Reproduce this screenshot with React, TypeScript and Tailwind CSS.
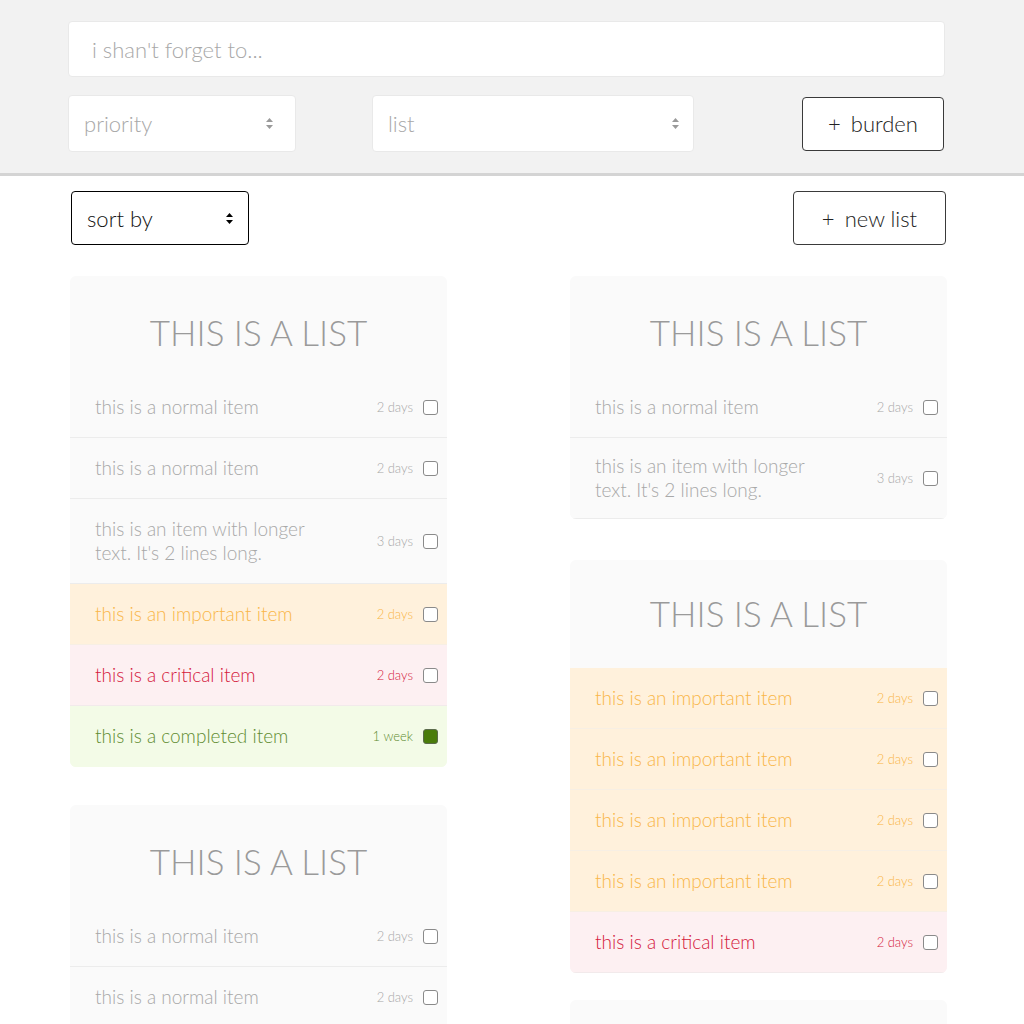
import React from "react";

type Kind = "normal" | "important" | "critical" | "done";

type Item = { text: string; due: string; kind: Kind; tight?: boolean };

const rowStyles: Record<Kind, string> = {
  normal: "bg-[#fafafa] text-[#a8a8a8] border-[#ececec]",
  important: "bg-[#fff1dc] text-[#f9b648] border-[#f7efe4]",
  critical: "bg-[#fdf0f2] text-[#d4183c] border-[#f2eaeb]",
  done: "bg-[#f3fbe7] text-[#5f8c31] border-[#f3fbe7]",
};

const Arrows = ({ color }: { color: string }) => (
  <svg width="9" height="13" viewBox="0 0 9 13" className="shrink-0">
    <path d="M4.5 1 L8 5 L1 5 Z" fill={color} />
    <path d="M4.5 12 L8 8 L1 8 Z" fill={color} />
  </svg>
);

const Checkbox = ({ checked }: { checked: boolean }) =>
  checked ? (
    <span className="block w-[15px] h-[15px] rounded-[3px] bg-[#4a7c0b] border border-[#5b6b4c]" />
  ) : (
    <span className="block w-[15px] h-[15px] rounded-[3px] bg-white border border-[#8a8a8a]" />
  );

const Row = ({ item }: { item: Item }) => (
  <div
    className={`flex items-center border-b pl-[25px] pr-[9px] ${item.tight ? "py-[16px]" : "py-[18px]"} ${rowStyles[item.kind]}`}
  >
    <div className="flex-1 text-[19px] leading-[24px] font-light">
      <div className="max-w-[232px]">{item.text}</div>
    </div>
    <span className="text-[13px] font-light mr-[10px] mt-[2px]">{item.due}</span>
    <Checkbox checked={item.kind === "done"} />
  </div>
);

const Card = ({
  items,
  className = "",
  tall = false,
}: {
  items: Item[];
  className?: string;
  tall?: boolean;
}) => (
  <div className={`bg-[#fafafa] rounded-[6px] overflow-hidden ${className}`}>
    <div className={`${tall ? "h-[108px] pb-[2px]" : "h-[101px] pt-[12px]"} flex items-center justify-center`}>
      <h2 className="text-[35px] font-light text-[#9a9a9a]">THIS IS A LIST</h2>
    </div>
    {items.map((item, i) => (
      <Row key={i} item={item} />
    ))}
  </div>
);

const normal: Item = { text: "this is a normal item", due: "2 days", kind: "normal" };
const longer: Item = {
  text: "this is an item with longer text. It's 2 lines long.",
  due: "3 days",
  kind: "normal",
};
const important: Item = { text: "this is an important item", due: "2 days", kind: "important" };
const critical: Item = { text: "this is a critical item", due: "2 days", kind: "critical" };
const done: Item = { text: "this is a completed item", due: "1 week", kind: "done" };

export default function App() {
  return (
    <div className="min-h-[1024px] bg-white font-['Lato_Light','Lato','Liberation_Sans',sans-serif] overflow-hidden">
      <header className="bg-[#f2f2f2] border-b-[3px] border-[#d4d4d4] px-[68px] pt-[21px] pb-[21px]">
        <div className="w-[877px]">
          <input
            className="w-full h-[56px] bg-white rounded-[4px] border border-[#e9e9e9] pl-[23px] text-[22px] font-light outline-none placeholder:text-[#a8a8a8]"
            placeholder="i shan't forget to..."
          />
          <div className="flex items-center mt-[18px]">
            <div className="w-[228px] h-[57px] bg-white rounded-[4px] border border-[#e9e9e9] flex items-center justify-between pl-[15px] pr-[21px]">
              <span className="text-[22px] font-light text-[#a8a8a8]">priority</span>
              <Arrows color="#9a9a9a" />
            </div>
            <div className="ml-[76px] w-[322px] h-[57px] bg-white rounded-[4px] border border-[#e9e9e9] flex items-center justify-between pl-[15px] pr-[13px]">
              <span className="text-[22px] font-light text-[#a8a8a8]">list</span>
              <Arrows color="#9a9a9a" />
            </div>
            <button className="ml-auto mr-[1px] w-[142px] h-[54px] bg-white rounded-[4px] border border-[#3a3a3a] text-[22px] font-light text-[#222] flex items-center justify-center gap-[10px]">
              <span>+</span>
              <span>burden</span>
            </button>
          </div>
        </div>
      </header>

      <main className="ml-[70px] w-[877px] pt-[15px]">
        <div className="flex items-center justify-between">
          <div className="ml-[1px] w-[178px] h-[54px] rounded-[4px] border border-black flex items-center justify-between pl-[15px] pr-[14px]">
            <span className="text-[22px] font-light text-[#111]">sort by</span>
            <Arrows color="#000" />
          </div>
          <button className="mr-[1px] w-[153px] h-[54px] bg-white rounded-[4px] border border-[#3a3a3a] text-[22px] font-light text-[#222] flex items-center justify-center gap-[10px]">
            <span>+</span>
            <span>new list</span>
          </button>
        </div>

        <div className="flex justify-between mt-[31px]">
          <div className="w-[377px] flex flex-col">
            <Card items={[normal, normal, longer, important, critical, done]} />
            <Card className="mt-[38px]" items={[normal, normal]} />
          </div>
          <div className="w-[377px] flex flex-col">
            <Card items={[normal, { ...longer, tight: true }]} />
            <Card tall className="mt-[41px]" items={[important, important, important, important, critical]} />
            <Card className="mt-[27px]" items={[]} />
          </div>
        </div>
      </main>
    </div>
  );
}
